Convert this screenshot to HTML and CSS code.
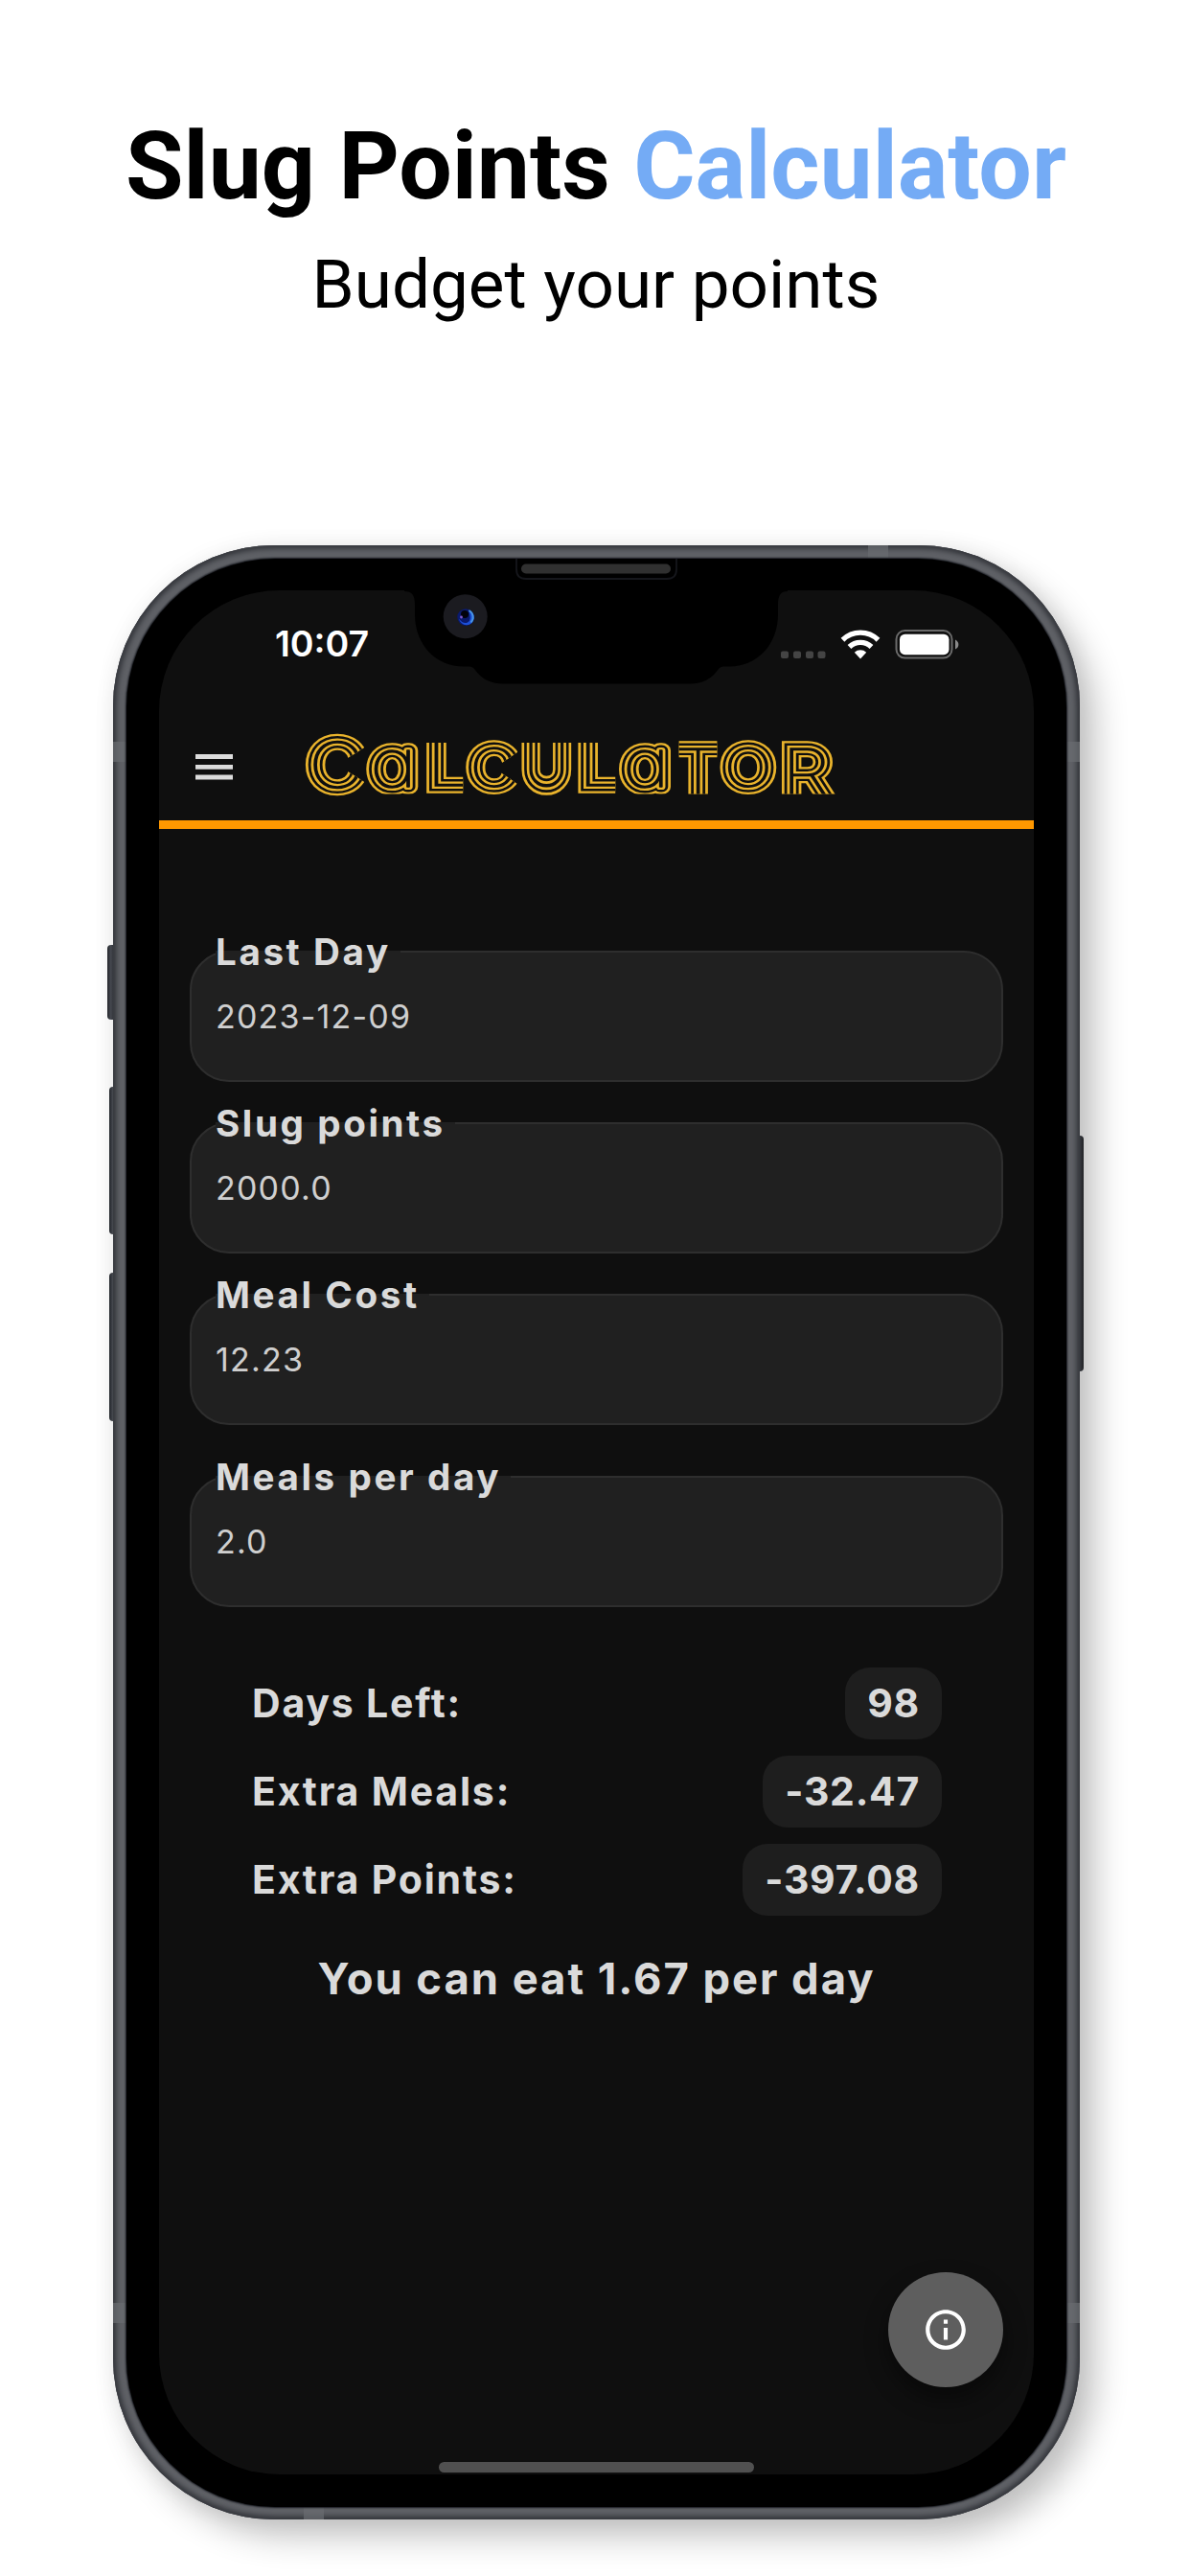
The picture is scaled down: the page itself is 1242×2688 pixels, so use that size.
FILE: index.html
```html
<!DOCTYPE html>
<html lang="en">
<head>
<meta charset="utf-8">
<title>Slug Points Calculator</title>
<link rel="stylesheet" href="styles.css">
</head>
<body>
<header class="promo">
  <h1 class="promo-title">Slug Points <span class="accent">Calculator</span></h1>
  <p class="promo-sub">Budget your points</p>
</header>
<main class="phone">
  <i class="key key-mute"></i><i class="key key-up"></i><i class="key key-down"></i><i class="key key-power"></i>
  <div class="frame">
    <i class="band band-tl"></i><i class="band band-tr"></i><i class="band band-bl"></i><i class="band band-br"></i><i class="band band-top"></i><i class="band band-bottom"></i>
    <div class="bezel">
      <div class="screen">
        <div class="status">
          <span class="clock">10:07</span>
          <svg class="status-icons" width="190" height="34" viewBox="0 0 190 34">
            <g fill="#444"><rect x="1" y="24.500" width="8" height="7.500" rx="2"/><rect x="14" y="24.500" width="8" height="7.500" rx="2"/><rect x="27" y="24.500" width="8" height="7.500" rx="2"/><rect x="39.500" y="24.500" width="8" height="7.500" rx="2"/></g>
            <g fill="none" stroke="#fff" stroke-width="5.400"><path d="M65.500 12.700a26.500 26.500 0 0 1 37 0"/><path d="M72.500 20a16.500 16.500 0 0 1 23 0"/></g>
            <path d="M84 32.500l-6.200-6.800a9 9 0 0 1 12.400 0z" fill="#fff"/>
            <rect x="121.500" y="3" width="58" height="28.600" rx="9" fill="none" stroke="#6b6b6b" stroke-width="2"/>
            <rect x="125" y="6.700" width="51.500" height="21.500" rx="5.500" fill="#fff"/>
            <path d="M183 12.500c4.500 2 4.500 8 0 10z" fill="#8a8a8a"/>
          </svg>
        </div>
        <div class="appbar">
          <svg class="menu" width="39" height="27" viewBox="0 0 39 27"><path d="M0 2.500h39M0 13.300h39M0 24h39" stroke="#dcdcdc" stroke-width="4.800"/></svg>
          <svg class="logo" width="560" height="106" viewBox="316 740 560 106" role="img" aria-label="Calculator">
            <defs>
              <clipPath id="k0"><path d="M263.330 760H317V780L293.330 798L317 816V836H263.330Z"/></clipPath>
              <clipPath id="k1"><path d="M317 770H367.500V828.500H317Z"/></clipPath>
              <clipPath id="k2"><path d="M369 775H402.700V828.500H369Z"/></clipPath>
              <clipPath id="k3"><path d="M404 770H450V785L430 801.500L450 818V834H404Z"/></clipPath>
              <clipPath id="k4"><path d="M450 775H500V834H450Z"/></clipPath>
              <clipPath id="k5"><path d="M501 775H535.200V828.500H501Z"/></clipPath>
              <clipPath id="k6"><path d="M535.500 770H588V828.500H535.500Z"/></clipPath>
              <clipPath id="k7"><path d="M590.500 773H623.700V828.500H590.500Z"/></clipPath>
              <clipPath id="k8"><path d="M624 770H677V834H624Z"/></clipPath>
              <clipPath id="k9"><path d="M676.500 773H730V828.500H676.500Z"/></clipPath>
            </defs>
            <g class="word" transform="scale(1.2 1)">
              <g clip-path="url(#k0)"><g class="line-1"><text id="c0" class="g-cap" x="292.500" y="822.500">C</text></g><use href="#c0" class="line-2"/><use href="#c0" class="line-3"/><use href="#c0" class="line-4"/></g>
              <g clip-path="url(#k1)"><g class="line-1"><text id="c1" class="g-a" x="342.300" y="821">a</text></g><use href="#c1" class="line-2"/><use href="#c1" class="line-3"/><use href="#c1" class="line-4"/></g>
              <g clip-path="url(#k2)"><g class="line-1"><text id="c2" class="g-s g-start" x="371" y="820.500">l</text></g><use href="#c2" class="line-2"/><use href="#c2" class="line-3"/><use href="#c2" class="line-4"/></g>
              <g clip-path="url(#k3)"><g class="line-1"><text id="c3" class="g-r" x="429" y="821.500">c</text></g><use href="#c3" class="line-2"/><use href="#c3" class="line-3"/><use href="#c3" class="line-4"/></g>
              <g clip-path="url(#k4)"><g class="line-1"><text id="c4" class="g-u" transform="translate(475.200 820) scale(.95 1.200)">u</text></g><use href="#c4" class="line-2"/><use href="#c4" class="line-3"/><use href="#c4" class="line-4"/></g>
              <g clip-path="url(#k5)"><g class="line-1"><text id="c5" class="g-s g-start" x="503" y="820.500">l</text></g><use href="#c5" class="line-2"/><use href="#c5" class="line-3"/><use href="#c5" class="line-4"/></g>
              <g clip-path="url(#k6)"><g class="line-1"><text id="c6" class="g-a" x="562" y="821">a</text></g><use href="#c6" class="line-2"/><use href="#c6" class="line-3"/><use href="#c6" class="line-4"/></g>
              <g clip-path="url(#k7)"><g class="line-1"><text id="c7" class="g-s" x="607.100" y="831.500">t</text></g><use href="#c7" class="line-2"/><use href="#c7" class="line-3"/><use href="#c7" class="line-4"/></g>
              <g clip-path="url(#k8)"><g class="line-1"><text id="c8" class="g-r" x="650.800" y="821.500">o</text></g><use href="#c8" class="line-2"/><use href="#c8" class="line-3"/><use href="#c8" class="line-4"/></g>
              <g clip-path="url(#k9)"><g class="line-1"><text id="c9" class="g-s g-start" x="680" y="831.500">r</text></g><use href="#c9" class="line-2"/><use href="#c9" class="line-3"/><use href="#c9" class="line-4"/></g>
            </g>
          </svg>
        </div>
        <form class="fields">
          <div class="field"><span class="label">Last Day</span><span class="value">2023-12-09</span></div>
          <div class="field"><span class="label">Slug points</span><span class="value">2000.0</span></div>
          <div class="field"><span class="label">Meal Cost</span><span class="value">12.23</span></div>
          <div class="field field-last"><span class="label">Meals per day</span><span class="value">2.0</span></div>
        </form>
        <section class="results">
          <div class="row"><span class="name">Days Left:</span><span class="pill">98</span></div>
          <div class="row"><span class="name">Extra Meals:</span><span class="pill">-32.47</span></div>
          <div class="row"><span class="name">Extra Points:</span><span class="pill">-397.08</span></div>
        </section>
        <p class="summary">You can eat 1.67 per day</p>
        <div class="spacer"></div>
        <button class="fab" aria-label="Info">
          <svg width="50" height="50" viewBox="0 0 24 24" fill="#fff"><path d="M11 7h2v2h-2zm0 4h2v6h-2zm1-9C6.480 2 2 6.480 2 12s4.480 10 10 10 10-4.480 10-10S17.520 2 12 2zm0 18c-4.410 0-8-3.590-8-8s3.590-8 8-8 8 3.590 8 8-3.590 8-8 8z"/></svg>
        </button>
        <i class="home-bar"></i>
      </div>
      <svg class="notch" width="400" height="132" viewBox="422 582 400 132">
        <path d="M422 616C430 616 433 620 433 630V640C433 672 455 694.500 484 694.500C490 694.500 493 694 495 697C502 707 511 712.500 525 712.500H720C734 712.500 743 707 750 697C752 694 755 694.500 761 694.500C790 694.500 812 672 812 640V630C812 620 815 616 822 616V600H422Z" fill="#000"/>
        <path d="M539 582v11q0 10 10 10h147q10 0 10-10v-11" fill="none" stroke="#15161b" stroke-width="1.800"/>
        <rect x="544" y="587.500" width="156" height="10" rx="5" fill="#303030"/>
        <circle cx="485.700" cy="642.200" r="23" fill="#1b1b20"/>
        <circle cx="486" cy="643" r="8.700" fill="#0a1a6e"/>
        <path d="M489 635.500a8 8 0 1 1-10 9q4 6 9 4t1-13z" fill="#1c50d8"/>
        <path d="M489.500 636a8 8 0 0 1 2 12.500" fill="none" stroke="#4c9ae0" stroke-width="1.800"/>
        <circle cx="485" cy="640" r="4" fill="#02030c"/>
        <circle cx="481.500" cy="643" r="1.400" fill="#8059d0"/>
      </svg>
    </div>
  </div>
</main>
</body>
</html>
```
FILE: styles.css
```css
* { box-sizing: border-box; }
body { margin: 0; width: 1242px; height: 2688px; background: #fff; overflow: hidden; display: flex; flex-direction: column; align-items: center; }
.promo { height: 569px; padding: 116px 0 0 2px; text-align: center; font-family: Roboto, "Liberation Sans", sans-serif; color: #000; }
.promo-title { margin: 0; font-size: 98.400px; line-height: 116px; font-weight: 700; white-space: nowrap; }
.accent { color: #74abf5; }
.promo-sub { margin: 23px 0 0; font-size: 71px; line-height: 84px; }

.phone { position: relative; width: 1009px; height: 2060px; margin-left: 3px; }
.frame { position: relative; height: 2060px; padding: 13.500px 14px; border-radius: 168px; background: #5f6166;
  box-shadow: inset 0 0 2px 1px #3a3c42, inset 0 0 5px 4px #393b40, 16px 18px 34px rgba(0,0,0,.24), 0 0 24px rgba(0,0,0,.05); }
.bezel { position: relative; height: 2033px; padding: 33.500px 34px; border-radius: 155px; background: #000; box-shadow: 0 0 2px 1px #15171d; }
.screen { height: 1966px; border-radius: 126px; background: #0f0f0f; overflow: hidden; display: flex; flex-direction: column; font-family: Inter, "Liberation Sans", sans-serif; color: #dadada; }
.key { position: absolute; width: 8px; border-radius: 4px 0 0 4px; background: linear-gradient(90deg, #25282d, #4a4d54 45%, #2b2d32); }
.key-mute { left: -6px; top: 417px; height: 78px; }
.key-up { left: -4px; top: 565px; height: 154px; }
.key-down { left: -4px; top: 759px; height: 155px; }
.key-power { right: -4px; top: 616px; height: 246px; border-radius: 0 4px 4px 0; }
.band { position: absolute; width: 14px; height: 21px; background: rgba(105,108,112,.7); }
.band-tl { left: 0; top: 205px; }
.band-tr { right: 0; top: 205px; }
.band-bl { left: 0; bottom: 205px; }
.band-br { right: 0; bottom: 205px; }
.band-top { left: 788px; top: 0; width: 21px; height: 13px; }
.band-bottom { left: 199px; bottom: 0; width: 21px; height: 13px; }
.notch { position: absolute; left: 290px; top: 0; }

.status { height: 112px; padding: 34px 75px 0 121px; display: flex; justify-content: space-between; align-items: flex-start; }
.clock { font-size: 37.500px; line-height: 44px; font-weight: 600; color: #fff; }
.status-icons { margin-top: 5px; }
.appbar { height: 137px; padding: 12px 0 0 38px; display: flex; gap: 73px; border-bottom: 9px solid #ff9800; }
.menu { margin-top: 47px; }
.word { font-family: Inter, Lato, sans-serif; font-weight: 100; text-anchor: middle; font-feature-settings: "cv11"; stroke-linejoin: round; }
.g-cap { font-size: 66px; }
.g-r { font-size: 55.500px; text-transform: uppercase; }
.g-s { font-size: 68px; text-transform: uppercase; stroke-linejoin: miter; }
.g-u { font-size: 57px; text-transform: uppercase; }
.g-a { font-size: 70px; }
.g-start { text-anchor: start; }
.line-1 { fill: #e9b32c; stroke: #e9b32c; stroke-width: 15.500px; }
.line-2 { fill: #0f0f0f; stroke: #0f0f0f; stroke-width: 10.900px; }
.line-3 { fill: #e9b32c; stroke: #e9b32c; stroke-width: 6.200px; }
.line-4 { fill: #0f0f0f; stroke: #0f0f0f; stroke-width: 1.600px; }

.fields { padding: 127px 32px 0; display: flex; flex-direction: column; gap: 42px; }
.field { height: 137px; border: 2px solid #2e2e2e; border-radius: 41px; background: #202020; padding-left: 25px; display: flex; flex-direction: column; align-items: flex-start; }
.field-last { margin-top: 11px; }
.label { margin-top: -24px; height: 46px; padding-right: 10px; line-height: 46px; font-size: 38.600px; font-weight: 650; letter-spacing: 2.600px; background: linear-gradient(transparent 22px, #202020 22px); }
.value { margin-top: 24px; font-size: 34px; line-height: 42px; letter-spacing: 1.200px; color: #cfcfcf; }
.results { padding: 63px 96px 0; display: flex; flex-direction: column; gap: 17px; font-size: 41px; font-weight: 650; letter-spacing: .700px; }
.row { height: 75px; display: flex; align-items: center; justify-content: space-between; }
.name { padding: 0 0 2px 1px; letter-spacing: 1.800px; }
.pill { height: 75px; line-height: 74px; padding: 0 23px; border-radius: 26px; background: #1e1e1e; }
.summary { margin: 39px 0 0; text-align: center; font-size: 45.400px; line-height: 54px; font-weight: 650; letter-spacing: 1.950px; }
.spacer { flex: 1; }
.fab { align-self: flex-end; width: 120px; height: 120px; margin: 0 32px 0 0; padding: 0; border: 0; border-radius: 50%; background: #5e5e5e; display: flex; align-items: center; justify-content: center; box-shadow: 0 12px 24px rgba(0,0,0,.45); }
.home-bar { align-self: center; width: 329px; height: 11px; margin: 78px 0 2px; border-radius: 6px; background: #505050; }
```
